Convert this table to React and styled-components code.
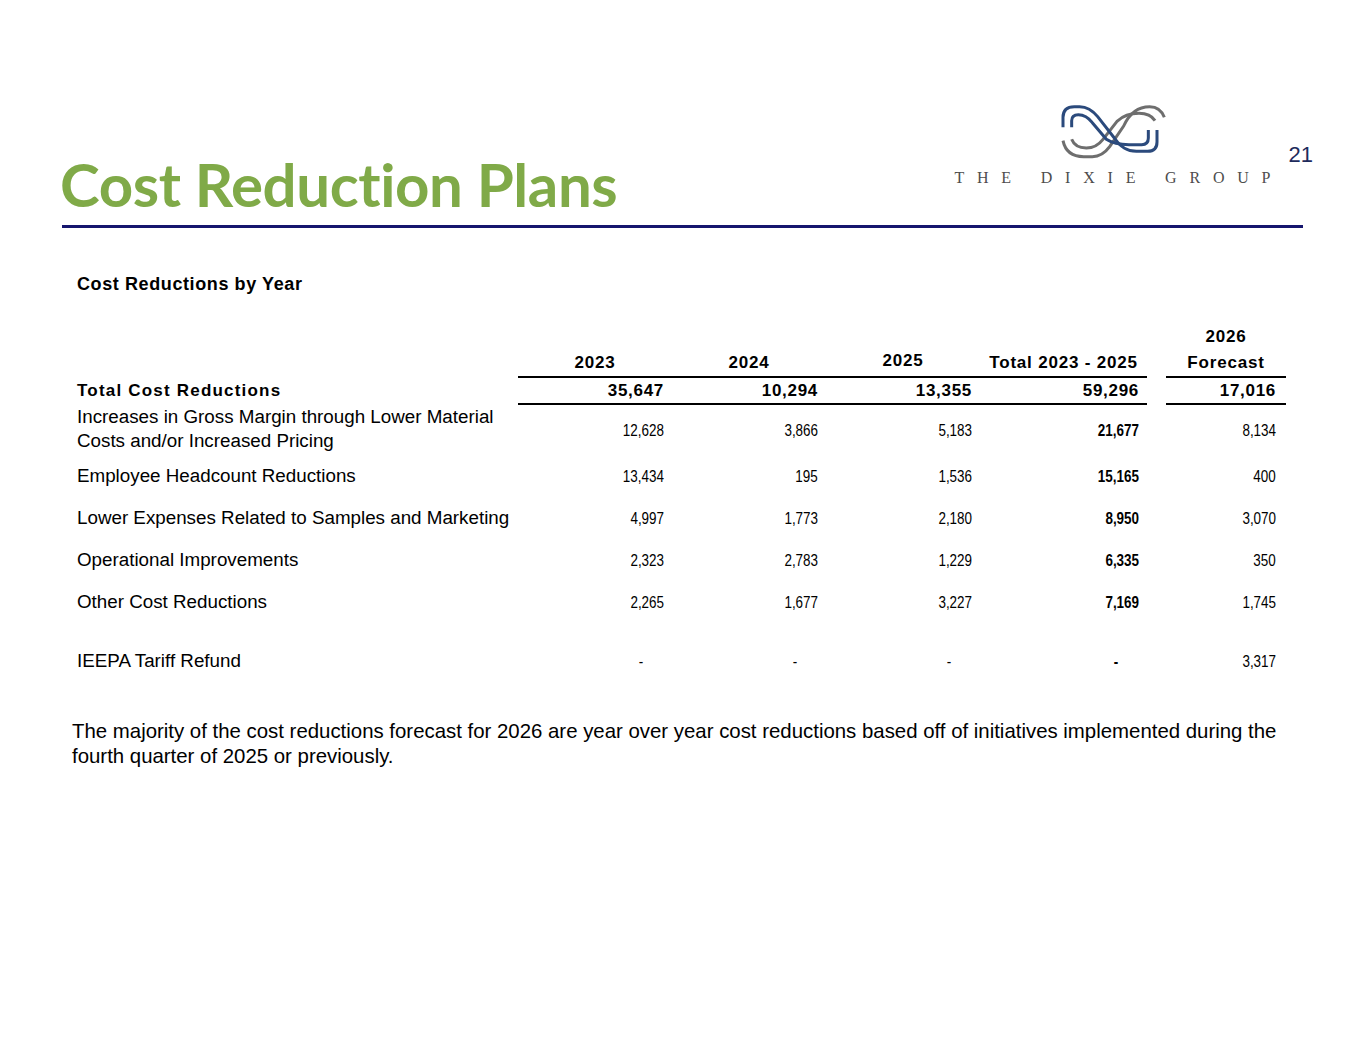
import React from "react";
import styled, { createGlobalStyle } from "styled-components";

const GlobalStyle = createGlobalStyle`
    html, body {
        margin: 0;
        padding: 0;
        background: #ffffff;
    }
    body {
        font-family: "Liberation Sans", Arial, sans-serif;
        color: #000000;
    }
`;

const cols = [441, 154, 154, 154, 167, 19, 120];

const years = [
    { label: "2023" },
    { label: "2024" },
    { label: "2025", raise: true },
    { label: "Total 2023 - 2025" },
];

const totals = ["35,647", "10,294", "13,355", "59,296"];

const rows = [
    {
        label: "Increases in Gross Margin through Lower Material Costs and/or Increased Pricing",
        values: ["12,628", "3,866", "5,183", "21,677", "8,134"],
        height: 50,
    },
    { label: "Employee Headcount Reductions", values: ["13,434", "195", "1,536", "15,165", "400"] },
    { label: "Lower Expenses Related to Samples and Marketing", values: ["4,997", "1,773", "2,180", "8,950", "3,070"] },
    { label: "Operational Improvements", values: ["2,323", "2,783", "1,229", "6,335", "350"] },
    { label: "Other Cost Reductions", values: ["2,265", "1,677", "3,227", "7,169", "1,745"] },
    { spacer: true },
    { label: "IEEPA Tariff Refund", values: ["-", "-", "-", "-", "3,317"] },
];

const DixieMark = () => (
    <LogoSvg viewBox="0 0 345 198" aria-hidden="true">
        <g fill="none" strokeWidth="9" strokeLinecap="butt" strokeLinejoin="round">
            {/* grey strand, rising left to right */}
            <path stroke="#6e6e6e" d="M30 128 Q40 176 92 176 H118 Q148 176 170 146 L212 84 Q238 26 290 26 Q322 26 334 58" />
            <path stroke="#6e6e6e" d="M56 124 Q66 150 100 150 Q130 150 150 124 L192 70 Q218 46 258 46 Q292 46 306 68" />
            {/* navy strand, falling left to right */}
            <path stroke="#2b4a7c" d="M30 88 V58 Q30 26 64 26 H80 Q110 26 134 56 L184 120 Q210 160 250 160 H284 Q312 160 312 132 V96" />
            <path stroke="#2b4a7c" d="M56 88 V68 Q56 50 76 50 Q100 50 118 74 L160 124 Q184 140 228 140 H266 Q286 140 286 120 V96" />
        </g>
    </LogoSvg>
);

const App = () => {
    return (
        <Slide>
            <GlobalStyle />
            <Header>
                <Title>Cost Reduction Plans</Title>
                <Brand>
                    <BrandMark>
                        <DixieMark />
                        <BrandName>THE DIXIE GROUP</BrandName>
                    </BrandMark>
                    <PageNumber>21</PageNumber>
                </Brand>
            </Header>
            <Rule />
            <Content>
                <Subtitle>Cost Reductions by Year</Subtitle>
                <Table>
                    <colgroup>
                        {cols.map((w, i) => (
                            <Col key={i} $width={w} />
                        ))}
                    </colgroup>
                    <thead>
                        <tr>
                            <HeadCell />
                            {years.map((y) => (
                                <HeadCell key={y.label} $raise={y.raise}>
                                    {y.label}
                                </HeadCell>
                            ))}
                            <HeadCell />
                            <HeadCell>
                                2026
                                <br />
                                Forecast
                            </HeadCell>
                        </tr>
                    </thead>
                    <tbody>
                        <tr>
                            <TotalLabel>Total Cost Reductions</TotalLabel>
                            {totals.map((v) => (
                                <TotalCell key={v}>{v}</TotalCell>
                            ))}
                            <SpacerCell />
                            <TotalCell $last>17,016</TotalCell>
                        </tr>
                        {rows.map((r, i) =>
                            r.spacer ? (
                                <SpacerRow key={i}>
                                    <td colSpan={7} />
                                </SpacerRow>
                            ) : (
                                <Row key={i} $height={r.height}>
                                    <Label>{r.label}</Label>
                                    {r.values.slice(0, 4).map((v, j) => (
                                        <Num key={j} $bold={j === 3} $dash={v === "-"}>
                                            <Figure>{v}</Figure>
                                        </Num>
                                    ))}
                                    <SpacerCell />
                                    <Num $last $dash={r.values[4] === "-"}>
                                        <Figure>{r.values[4]}</Figure>
                                    </Num>
                                </Row>
                            )
                        )}
                    </tbody>
                </Table>
                <Note>
                    The majority of the cost reductions forecast for 2026 are year over year cost reductions based off of
                    initiatives implemented during the fourth quarter of 2025 or previously.
                </Note>
            </Content>
        </Slide>
    );
};

export default App;

const Slide = styled.div`
    width: 1365px;
    height: 1055px;
    background: #ffffff;
    overflow: hidden;
`;

const Header = styled.div`
    display: flex;
    justify-content: space-between;
    height: 224px;
    padding: 0 52px 0 60px;
    box-sizing: border-box;
`;

const Title = styled.h1`
    align-self: flex-end;
    margin: 0 0 10px;
    font-family: Lato, "Open Sans", sans-serif;
    font-weight: 700;
    font-size: 60px;
    line-height: 1;
    letter-spacing: -0.4px;
    color: #80aa48;
`;

const Brand = styled.div`
    display: flex;
    align-items: flex-start;
    gap: 18px;
    padding-top: 98px;
`;

const BrandMark = styled.div`
    display: flex;
    flex-direction: column;
    align-items: center;
`;

const LogoSvg = styled.svg`
    width: 115px;
    height: 66px;
    margin-right: 4px;
    display: block;
`;

const BrandName = styled.div`
    margin-top: 5px;
    margin-right: -12.8px;
    font-family: "Liberation Serif", "Times New Roman", serif;
    font-size: 16px;
    line-height: 18px;
    letter-spacing: 12.8px;
    word-spacing: 0;
    color: #4d4d4d;
    white-space: nowrap;
`;

const PageNumber = styled.div`
    margin-top: 46px;
    font-family: "Liberation Sans", Arial, sans-serif;
    font-size: 22px;
    line-height: 22px;
    color: #1e2b5c;
`;

const Rule = styled.div`
    height: 3px;
    margin: 1px 62px 0 62px;
    background: #16166e;
`;

const Content = styled.div`
    padding: 46px 0 0 72px;
`;

const Subtitle = styled.div`
    margin-left: 5px;
    font-family: "Liberation Sans", Arial, sans-serif;
    font-weight: 700;
    font-size: 18px;
    line-height: 20px;
    letter-spacing: 0.6px;
`;

const Table = styled.table`
    margin-left: 5px;
    border-collapse: separate;
    border-spacing: 0;
    table-layout: fixed;
    width: 1209px;
    font-family: "Liberation Sans", Arial, sans-serif;
`;

const Col = styled.col`
    width: ${(p) => p.$width}px;
`;

const HeadCell = styled.th`
    height: 80px;
    padding: 0 0 ${(p) => (p.$raise ? "2px" : "0")};
    vertical-align: bottom;
    text-align: center;
    font-weight: 700;
    font-size: 17px;
    line-height: 26px;
    letter-spacing: 0.8px;
`;

const TotalLabel = styled.td`
    height: 25px;
    padding: 0;
    font-weight: 700;
    font-size: 17px;
    letter-spacing: 1.2px;
    vertical-align: middle;
    white-space: nowrap;
`;

const TotalCell = styled.td`
    height: 25px;
    padding: 0 ${(p) => (p.$last ? "10px" : "8px")} 0 0;
    border-top: 2px solid #000000;
    border-bottom: 2px solid #000000;
    text-align: right;
    font-weight: 700;
    font-size: 17px;
    letter-spacing: 0.7px;
    vertical-align: middle;
`;

const SpacerCell = styled.td`
    padding: 0;
`;

const SpacerRow = styled.tr`
    height: 17px;
`;

const Row = styled.tr`
    height: ${(p) => p.$height || 42}px;
`;

const Label = styled.td`
    padding: 0 0 3px;
    font-size: 18.8px;
    line-height: 24px;
    vertical-align: middle;
`;

const Num = styled.td`
    padding: 0 ${(p) => (p.$dash ? "29px" : p.$last ? "10px" : "8px")} 0 0;
    text-align: right;
    vertical-align: middle;
    font-size: 16px;
    font-weight: ${(p) => (p.$bold ? 700 : 400)};
`;

// the deck sets figures in a narrow face; squeeze the regular one to match
const Figure = styled.span`
    display: inline-block;
    transform: scaleX(0.84);
    transform-origin: right center;
`;

const Note = styled.p`
    margin: 36px 0 0;
    width: 1215px;
    font-family: "Liberation Sans", Arial, sans-serif;
    font-size: 20.4px;
    line-height: 25px;
`;
